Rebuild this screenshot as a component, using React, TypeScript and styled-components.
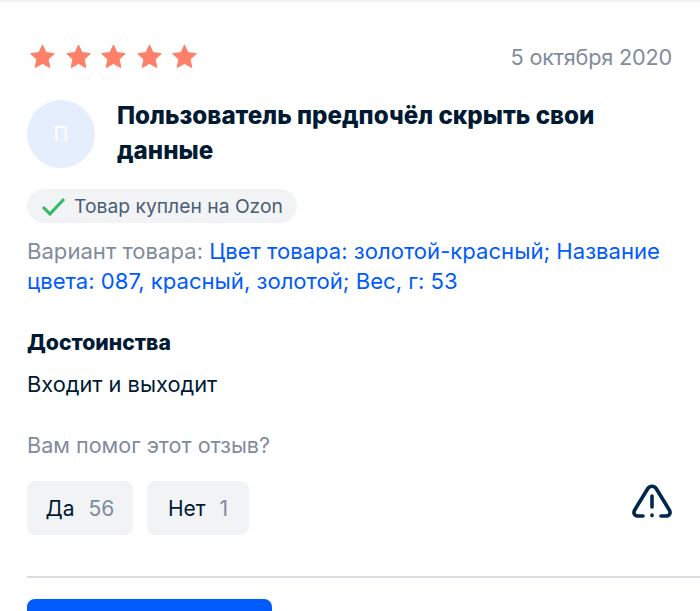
import styled, { createGlobalStyle } from 'styled-components';

const GlobalStyle = createGlobalStyle`
  * {
    box-sizing: border-box;
    margin: 0;
    padding: 0;
  }
  html, body {
    height: 611px;
    overflow: hidden;
    background: #fff;
    font-family: 'Inter', 'Noto Sans', sans-serif;
  }
  button {
    border: none;
    background: none;
    font-family: inherit;
  }
`;

const Review = styled.section`
  border-top: 2px solid #f0f1f3;
  padding: 40px 28px 0 27px;
  color: #001a34;
`;

const TopRow = styled.div`
  display: flex;
  align-items: center;
  justify-content: space-between;
  height: 30px;
`;

const Stars = styled.div`
  display: flex;
  gap: 10.6px;
  padding-left: 3px;
  margin-top: -2px;
`;

const DateText = styled.span`
  font-size: 21.7px;
  color: #7f8c9b;
  letter-spacing: -0.2px;
`;

const Author = styled.div`
  display: flex;
  gap: 22px;
  margin-top: 28px;
`;

const Avatar = styled.div`
  flex: none;
  display: flex;
  align-items: center;
  justify-content: center;
  width: 68px;
  height: 68px;
  border-radius: 50%;
  background: #e5eefd;
  color: #fff;
  font-size: 20px;
`;

const AuthorName = styled.h2`
  width: 520px;
  margin-top: -2px;
  font-size: 24.2px;
  font-weight: 800;
  line-height: 35px;
  color: #001a34;
`;

const Badge = styled.div`
  display: inline-flex;
  align-items: center;
  gap: 8px;
  height: 34px;
  margin-top: 21px;
  padding: 0 14px;
  border-radius: 17px;
  background: #f2f3f5;
  font-size: 19.3px;
  color: #4a5e73;
`;

const Variant = styled.p`
  margin-top: 13px;
  font-size: 22.1px;
  line-height: 30px;
  color: #7f8c9b;
`;

const VariantValue = styled.span`
  color: #005bff;
`;

const SectionTitle = styled.h3`
  margin-top: 31px;
  font-size: 21.2px;
  font-weight: 800;
  line-height: 30px;
  color: #001a34;
`;

const SectionText = styled.p`
  margin-top: 12px;
  font-size: 21.8px;
  line-height: 30px;
  color: #001a34;
`;

const Question = styled.p`
  margin-top: 31px;
  font-size: 21.6px;
  line-height: 30px;
  color: #7f8c9b;
`;

const VoteRow = styled.div`
  display: flex;
  align-items: center;
  gap: 14px;
  margin-top: 21px;
`;

const VoteButton = styled.button`
  display: flex;
  align-items: center;
  justify-content: center;
  gap: 14px;
  width: ${(p: { $w: number }) => p.$w}px;
  height: 54px;
  border-radius: 8px;
  background: #f2f3f5;
  font-size: 21px;
  color: #001a34;
`;

const VoteCount = styled.span`
  color: #7f8c9b;
`;

const ReportIcon = styled.svg`
  margin-left: auto;
  margin-top: -14px;
`;

const Divider = styled.hr`
  border: none;
  height: 2px;
  margin: 41px -28px 0 0;
  background: #dadde1;
`;

const PrimaryButton = styled.button`
  display: block;
  width: 245px;
  height: 12px;
  margin-top: 21px;
  border-radius: 8px 8px 0 0;
  background: #005bff;
`;

const Star = () => (
  <svg width="25" height="25" viewBox="0 0 25 25">
    <path
      d="M12.5 1 L16 8.6 L24.3 9.6 L18.2 15.3 L19.8 23.6 L12.5 19.5 L5.2 23.6 L6.8 15.3 L0.7 9.6 L9 8.6 Z"
      fill="#ff8068"
      stroke="#ff8068"
      strokeWidth="1"
      strokeLinejoin="round"
    />
  </svg>
);

const App = () => {
  return (
    <>
      <GlobalStyle />
      <Review>
        <TopRow>
          <Stars>
            {[0, 1, 2, 3, 4].map((i) => (
              <Star key={i} />
            ))}
          </Stars>
          <DateText>5 октября 2020</DateText>
        </TopRow>
        <Author>
          <Avatar>П</Avatar>
          <AuthorName>Пользователь предпочёл скрыть свои данные</AuthorName>
        </Author>
        <Badge>
          <svg width="25" height="20" viewBox="0 0 25 20">
            <path d="M2 11 L9 18 L23 3" fill="none" stroke="#2ebd62" strokeWidth="3" />
          </svg>
          Товар куплен на Ozon
        </Badge>
        <Variant>
          Вариант товара: <VariantValue>Цвет товара: золотой-красный; Название цвета: 087, красный, золотой; Вес, г: 53</VariantValue>
        </Variant>
        <SectionTitle>Достоинства</SectionTitle>
        <SectionText>Входит и выходит</SectionText>
        <Question>Вам помог этот отзыв?</Question>
        <VoteRow>
          <VoteButton $w={106}>
            Да <VoteCount>56</VoteCount>
          </VoteButton>
          <VoteButton $w={102}>
            Нет <VoteCount>1</VoteCount>
          </VoteButton>
          <ReportIcon width="40" height="35" viewBox="0 0 40 35" fill="none" stroke="#00284d" strokeWidth="3.6" strokeLinecap="round">
            <path d="M11 32 H6 C2.5 32 0.9 29 2.7 26 L15.5 5 C17.6 1.3 22.4 1.3 24.5 5 L37.3 26 C39.1 29 37.5 32 34 32 H29" />
            <path d="M20 12 V23" />
            <path d="M20 31 V31.6" />
          </ReportIcon>
        </VoteRow>
        <Divider />
        <PrimaryButton />
      </Review>
    </>
  );
};

export default App;
